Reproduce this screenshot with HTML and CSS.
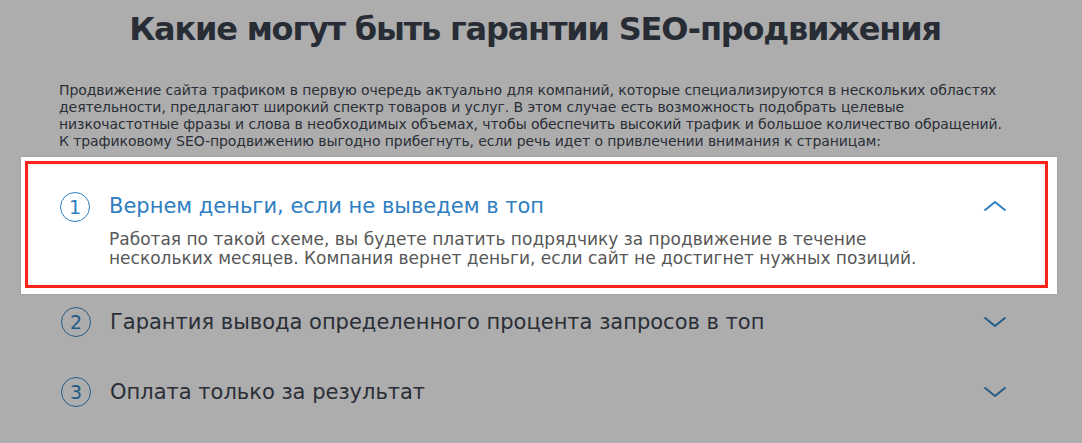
FILE: index.html
```html
<!DOCTYPE html>
<html lang="ru">
<head>
<meta charset="utf-8">
<link rel="stylesheet" href="styles.css">
</head>
<body>
<section class="guarantees">
  <h1 class="title">Какие могут быть гарантии SEO-продвижения</h1>
  <p class="lead">Продвижение сайта трафиком в первую очередь актуально для компаний, которые специализируются в нескольких областях деятельности, предлагают широкий спектр товаров и услуг. В этом случае есть возможность подобрать целевые<br>низкочастотные фразы и слова в необходимых объемах, чтобы обеспечить высокий трафик и большое количество обращений.<br>К трафиковому SEO-продвижению выгодно прибегнуть, если речь идет о привлечении внимания к страницам:</p>

  <div class="accordion">
    <div class="card">
      <div class="card-frame">
        <div class="item item-open">
          <span class="num">1</span>
          <div class="item-body">
            <div class="item-title">Вернем деньги, если не выведем в топ</div>
            <div class="item-text">Работая по такой схеме, вы будете платить подрядчику за продвижение в течение нескольких месяцев. Компания вернет деньги, если сайт не достигнет нужных позиций.</div>
          </div>
          <svg class="chev" width="24" height="12" viewBox="0 0 24 12"><path d="M1.5 10.5 L12 2 L22.5 10.5" fill="none" stroke="currentColor" stroke-width="2"/></svg>
        </div>
      </div>
    </div>

    <div class="item item-closed">
      <span class="num">2</span>
      <div class="item-body">
        <div class="item-title">Гарантия вывода определенного процента запросов в топ</div>
      </div>
      <svg class="chev" width="24" height="12" viewBox="0 0 24 12"><path d="M1.5 1.5 L12 10 L22.5 1.5" fill="none" stroke="currentColor" stroke-width="2"/></svg>
    </div>

    <div class="item item-closed">
      <span class="num">3</span>
      <div class="item-body">
        <div class="item-title">Оплата только за результат</div>
      </div>
      <svg class="chev" width="24" height="12" viewBox="0 0 24 12"><path d="M1.5 1.5 L12 10 L22.5 1.5" fill="none" stroke="currentColor" stroke-width="2"/></svg>
    </div>
  </div>
</section>
</body>
</html>
```
FILE: styles.css
```css
html, body {
  margin: 0;
  padding: 0;
  background: #adadad;
}

body {
  font-family: "DejaVu Sans", "Noto Sans", sans-serif;
  color: #2a2e36;
  height: 443px;
  overflow: hidden;
}

.guarantees {
  padding: 10px 0 0;
}

.title {
  margin: 0;
  text-align: center;
  font-family: "DejaVu Sans", sans-serif;
  font-weight: bold;
  font-size: 32px;
  letter-spacing: -1.2px;
  line-height: 38px;
  color: #282c35;
  padding-right: 12px;
}

.lead {
  margin: 34px 0 0 59px;
  width: 980px;
  font-size: 14px;
  letter-spacing: -0.08px;
  line-height: 17px;
  color: #2a2e36;
}

.card {
  margin: 7px 25px 0 21px;
  background: #ffffff;
  padding: 4px 9px 6px 4px;
  box-shadow: 0 0 2px rgba(0,0,0,0.15);
}

.card-frame {
  border: 3px solid #ff2419;
  box-shadow: inset 0 0 4px rgba(0,0,0,0.12);
}

.item {
  display: flex;
  align-items: flex-start;
}

.item-open {
  padding: 28px 38px 17px 32px;
}

.item-closed {
  padding: 13px 75px 0 61px;
  height: 70px;
  box-sizing: border-box;
}

.num {
  flex: none;
  width: 28px;
  height: 28px;
  border: 1px solid #2e7ec1;
  border-radius: 50%;
  display: flex;
  align-items: center;
  justify-content: center;
  font-size: 19px;
  color: #2e7ec1;
  margin-right: 19px;
}

.item-closed .num {
  border-color: #245c87;
  color: #1f5a86;
}

.item-body {
  flex: 1;
}

.item-title {
  font-size: 21px;
  line-height: 28px;
  color: #2e7ec1;
}

.item-closed .item-title {
  line-height: 30px;
  color: #2a2e36;
}

.item-text {
  margin-top: 10px;
  font-size: 17px;
  line-height: 19px;
  color: #575757;
  width: 815px;
}

.chev {
  flex: none;
  color: #2e7ec1;
  margin-top: 8px;
}

.item-closed .chev {
  color: #245c87;
  margin-top: 9px;
}
```
